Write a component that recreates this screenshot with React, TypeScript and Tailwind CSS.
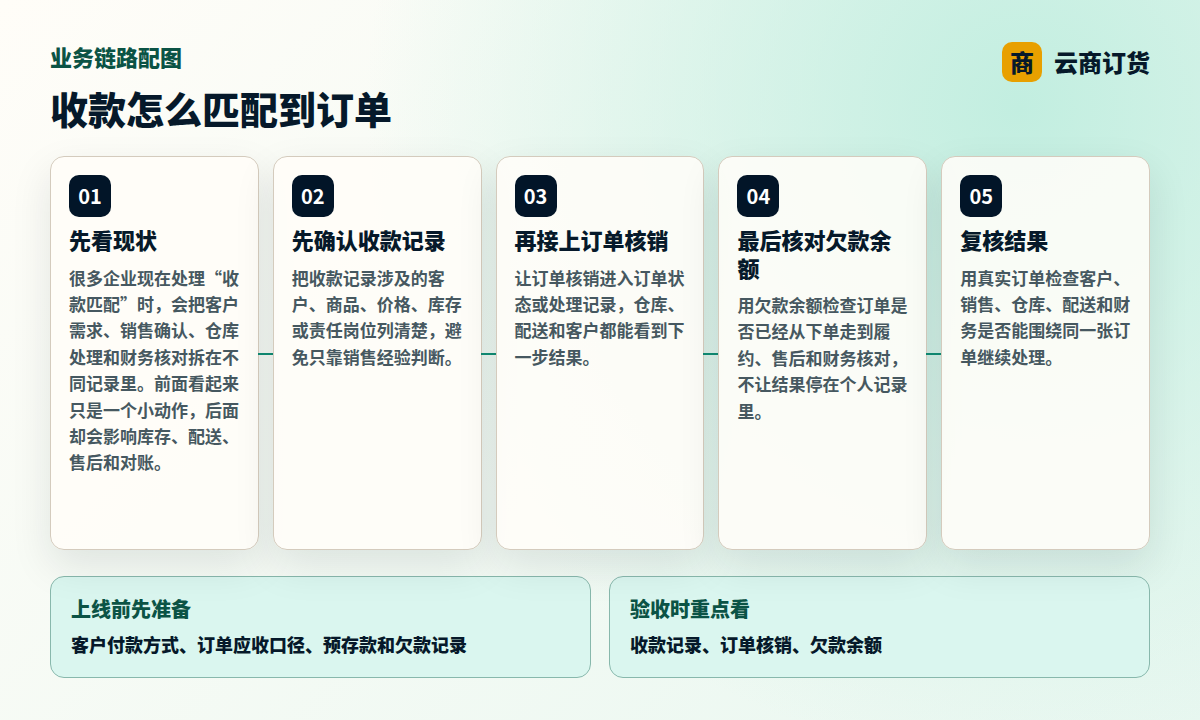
const steps = [
  { n: "01", title: "先看现状", body: "很多企业现在处理“收款匹配”时，会把客户需求、销售确认、仓库处理和财务核对拆在不同记录里。前面看起来只是一个小动作，后面却会影响库存、配送、售后和对账。" },
  { n: "02", title: "先确认收款记录", body: "把收款记录涉及的客户、商品、价格、库存或责任岗位列清楚，避免只靠销售经验判断。" },
  { n: "03", title: "再接上订单核销", body: "让订单核销进入订单状态或处理记录，仓库、配送和客户都能看到下一步结果。" },
  { n: "04", title: "最后核对欠款余额", body: "用欠款余额检查订单是否已经从下单走到履约、售后和财务核对，不让结果停在个人记录里。" },
  { n: "05", title: "复核结果", body: "用真实订单检查客户、销售、仓库、配送和财务是否能围绕同一张订单继续处理。" },
];

const notes = [
  { title: "上线前先准备", body: "客户付款方式、订单应收口径、预存款和欠款记录" },
  { title: "验收时重点看", body: "收款记录、订单核销、欠款余额" },
];

export default function App() {
  return (
    <div className="w-[1200px] h-[720px] overflow-hidden flex flex-col px-[50px] pt-[42px] font-['Noto_Sans_CJK_SC',sans-serif] font-extrabold bg-[radial-gradient(circle_at_85%_15%,#c2eee0_0%,rgba(194,238,224,0)_55%),linear-gradient(135deg,#fffdf8_0%,#e8f7f0_100%)]">
      <header className="flex justify-between items-start h-[114px]">
        <div>
          <div className="-mt-[2px] text-[22px] leading-[32px] text-[#0b5345]">业务链路配图</div>
          <h1 className="mt-[10px] text-[38px] leading-[52px] text-[#06192a]">收款怎么匹配到订单</h1>
        </div>
        <div className="flex items-center gap-3">
          <div className="w-10 h-10 rounded-[10px] bg-[#e8a000] flex items-center justify-center text-[24px] text-[#06192a]">商</div>
          <div className="text-[24px] leading-[40px] text-[#06192a]">云商订货</div>
        </div>
      </header>

      <div className="flex gap-[14px] h-[394px]">
        {steps.map((s, i) => (
          <div key={s.n} className="relative flex-1 rounded-[14px] border border-[#d4cbbd] bg-[rgba(255,253,248,0.88)] shadow-[0_16px_40px_rgba(6,25,42,0.1)] px-[18px] pt-[18px]">
            <div className="w-[42px] h-[42px] rounded-[10px] bg-[#021528] flex items-center justify-center text-[20px] font-bold text-white">{s.n}</div>
            <div className="mt-[9px] text-[22px] leading-[27.5px] text-[#06192a]">{s.title}</div>
            <div className="mt-[11px] text-[17px] leading-[26.4px] font-bold text-[#465860]">{s.body}</div>
            {i < 4 && <div className="absolute top-1/2 -right-[15px] w-[15px] h-[2px] bg-[#0f8a72]" />}
          </div>
        ))}
      </div>

      <div className="mt-[26px] flex gap-[18px] h-[102px]">
        {notes.map((n) => (
          <div key={n.title} className="flex-1 rounded-[14px] border border-[#88b8ac] bg-[#daf6ef] px-5 pt-[19px]">
            <div className="text-[20px] leading-[26px] text-[#0b5345]">{n.title}</div>
            <div className="mt-[9px] text-[18px] leading-[26px] text-[#06192a]">{n.body}</div>
          </div>
        ))}
      </div>
    </div>
  );
}
